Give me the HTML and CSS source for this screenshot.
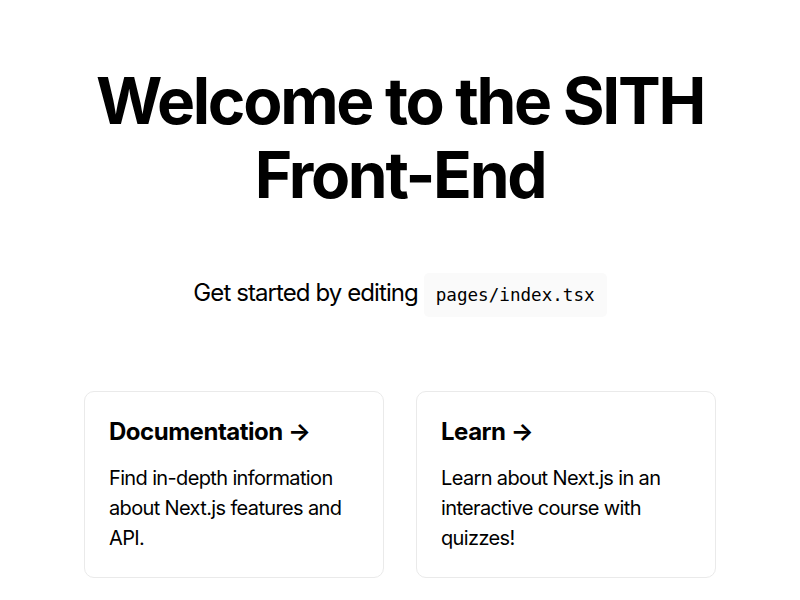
FILE: index.html
```html
<!DOCTYPE html>
<html lang="en">
<head>
<meta charset="utf-8">
<title>SITH Front-End</title>
<link rel="stylesheet" href="styles.css">
</head>
<body>
<div class="container">
  <main class="main">
    <h1 class="title">Welcome to the SITH Front-End</h1>
    <p class="description">Get started by editing <code class="code">pages/index.tsx</code></p>
    <div class="grid">
      <a class="card" href="#">
        <h2>Documentation &rarr;</h2>
        <p>Find in-depth information about Next.js features and API.</p>
      </a>
      <a class="card" href="#">
        <h2>Learn &rarr;</h2>
        <p>Learn about Next.js in an interactive course with quizzes!</p>
      </a>
    </div>
  </main>
</div>
</body>
</html>
```
FILE: styles.css
```css
* { box-sizing: border-box; }
html, body {
  margin: 0;
  padding: 0;
  overflow: hidden;
  font-family: Inter, "Noto Sans", "Liberation Sans", sans-serif;
  color: #000;
  background: #fff;
}
.container { padding: 0 2rem; }
.main {
  min-height: 100vh;
  padding: 4rem 0;
  display: flex;
  flex-direction: column;
  justify-content: flex-start;
  align-items: center;
}
.title {
  margin: 0;
  line-height: 1.15;
  font-size: 4rem;
  font-weight: 700;
  text-align: center;
  letter-spacing: -0.036em;
}
.description {
  margin: 4rem 0;
  line-height: 1.5;
  font-size: 1.5rem;
  text-align: center;
  letter-spacing: -0.038em;
}
.code {
  background: #fafafa;
  border-radius: 5px;
  padding: 0.75rem;
  font-size: 1.1rem;
  font-family: "DejaVu Sans Mono", "Liberation Mono", monospace;
  letter-spacing: 0;
}
.grid {
  display: flex;
  align-items: center;
  justify-content: center;
  flex-wrap: wrap;
  max-width: 800px;
}
.card {
  margin: 1rem;
  padding: 1.5rem;
  text-align: left;
  color: inherit;
  text-decoration: none;
  border: 1px solid #eaeaea;
  border-radius: 10px;
  max-width: 300px;
}
.card h2 {
  margin: 0 0 1rem 0;
  font-size: 1.5rem;
  line-height: 1.3;
  font-weight: 700;
  letter-spacing: -0.02em;
}
.card p {
  margin: 0;
  font-size: 1.25rem;
  line-height: 1.5;
  letter-spacing: -0.032em;
}
```
